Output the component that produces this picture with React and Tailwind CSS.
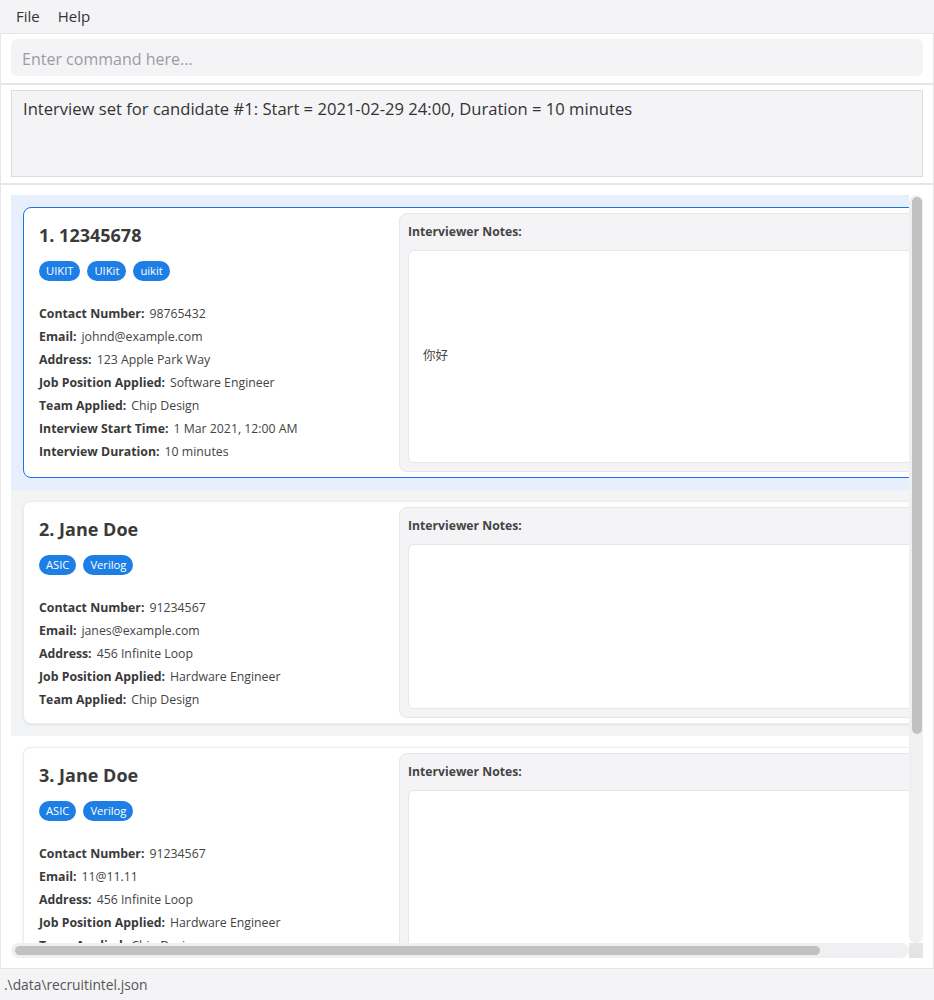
const FONT = "font-['Open_Sans','Noto_Sans_CJK_SC',sans-serif]";

const candidates = [
  {
    id: 1,
    name: '12345678',
    tags: ['UIKIT', 'UIKit', 'uikit'],
    fields: [
      ['Contact Number:', '98765432'],
      ['Email:', 'johnd@example.com'],
      ['Address:', '123 Apple Park Way'],
      ['Job Position Applied:', 'Software Engineer'],
      ['Team Applied:', 'Chip Design'],
      ['Interview Start Time:', '1 Mar 2021, 12:00 AM'],
      ['Interview Duration:', '10 minutes'],
    ],
    notes: '你好',
  },
  {
    id: 2,
    name: 'Jane Doe',
    tags: ['ASIC', 'Verilog'],
    fields: [
      ['Contact Number:', '91234567'],
      ['Email:', 'janes@example.com'],
      ['Address:', '456 Infinite Loop'],
      ['Job Position Applied:', 'Hardware Engineer'],
      ['Team Applied:', 'Chip Design'],
    ],
    notes: '',
  },
  {
    id: 3,
    name: 'Jane Doe',
    tags: ['ASIC', 'Verilog'],
    fields: [
      ['Contact Number:', '91234567'],
      ['Email:', '11@11.11'],
      ['Address:', '456 Infinite Loop'],
      ['Job Position Applied:', 'Hardware Engineer'],
      ['Team Applied:', 'Chip Design'],
    ],
    notes: '',
  },
];

function CandidateCell({ c, index }) {
  const selected = index === 0;
  const cellBg = selected ? 'bg-[#e8effc]' : index % 2 === 1 ? 'bg-[#f3f4f6]' : 'bg-white';
  const cardBorder = selected ? 'border-[#1a73e8]' : 'border-[#ececec] shadow-[0_1px_3px_rgba(0,0,0,0.08)]';

  return (
    <div className={`${cellBg} px-[12px] ${selected ? 'pt-[12px] pb-[12px]' : 'pt-[11px] pb-[12px]'}`}>
      <div className={`flex bg-white border ${cardBorder} rounded-[8px]`}>
        <div className={`w-[375px] shrink-0 px-[15px] pt-[15px] ${selected ? 'pb-[14px]' : 'pb-[12px]'}`}>
          <div className="text-[18px] leading-[24px] font-bold text-[#3a3a3a]">
            {c.id}. {c.name}
          </div>
          <div className="flex gap-[7px] mt-[14px]">
            {c.tags.map((t) => (
              <span key={t} className="h-[20px] px-[7px] rounded-full bg-[#1d7fe6] text-white text-[11.2px] leading-[20px]">
                {t}
              </span>
            ))}
          </div>
          <div className="mt-[21px] flex flex-col">
            {c.fields.map(([label, value]) => (
              <div key={label} className="flex gap-[5px] text-[12.3px] leading-[23px] text-[#444]">
                <span className="font-bold text-[#3a3a3a]">{label}</span>
                <span>{value}</span>
              </div>
            ))}
          </div>
        </div>
        <div className="w-[580px] shrink-0 my-[5px] mr-[6px] bg-[#f4f4f6] border border-[#e6e6e6] rounded-[8px] p-[8px] flex flex-col">
          <div className="text-[12.2px] leading-[19px] font-bold text-[#444] mb-[9px]">Interviewer Notes:</div>
          <div className="flex-1 bg-white border border-[#e6e6e6] rounded-[6px] px-[14px] flex items-center text-[12.5px] text-[#444]">
            {c.notes}
          </div>
        </div>
      </div>
    </div>
  );
}

export default function App() {
  return (
    <div className={`w-[934px] h-[1000px] bg-white flex flex-col overflow-hidden ${FONT}`}>
      {/* menu bar */}
      <div className="h-[33px] shrink-0 bg-[#f4f4f6] flex items-center gap-[18px] px-[16px] text-[15px] text-[#333]">
        <span>File</span>
        <span>Help</span>
      </div>

      {/* command box */}
      <div className="h-[51px] shrink-0 border border-[#e6e6e6] px-[10px] pt-[5px]">
        <div className="h-[37px] rounded-[6px] bg-[#f4f4f6] flex items-center pt-[2px] px-[11px] text-[16px] text-[#9a9ca3]">
          Enter command here...
        </div>
      </div>

      {/* result display */}
      <div className="h-[100px] shrink-0 border border-[#e6e6e6] px-[10px] pt-[5px]">
        <div className="h-[87px] bg-[#f4f4f6] border border-[#dcdcdc] px-[11px] pt-[6px] text-[16.6px] leading-[24px] text-[#333]">
          Interview set for candidate #1: Start = 2021-02-29 24:00, Duration = 10 minutes
        </div>
      </div>

      {/* candidate list */}
      <div className="h-[785px] shrink-0 border border-[#e6e6e6] p-[10px]">
        <div className="h-[763px] grid grid-cols-[1fr_14px] grid-rows-[1fr_15px]">
          <div className="overflow-hidden">
            <div className="w-[1000px]">
              {candidates.map((c, i) => (
                <CandidateCell key={c.id} c={c} index={i} />
              ))}
            </div>
          </div>
          <div className="bg-[#f0f0f2] rounded-full p-[2px] pl-[3px] pr-[1px]">
            <div className="h-[537px] bg-[#c1c1c1] rounded-full" />
          </div>
          <div className="bg-[#f0f0f2] rounded-full py-[3px] pl-[4px] pr-[2px]">
            <div className="w-[805px] h-full bg-[#c1c1c1] rounded-full" />
          </div>
          <div className="bg-[#e4e4e4]" />
        </div>
      </div>

      {/* status bar */}
      <div className="flex-1 bg-[#f4f4f6] flex items-center pt-[2px] px-[4px] text-[13.8px] text-[#555]">
        .\data\recruitintel.json
      </div>
    </div>
  );
}
